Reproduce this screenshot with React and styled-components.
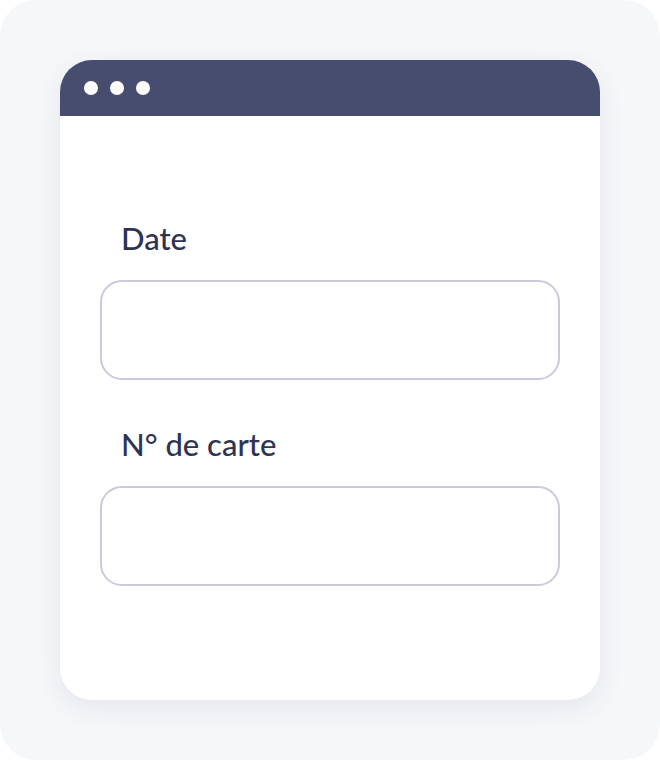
import styled, { createGlobalStyle } from "styled-components";

const Global = createGlobalStyle`
	html, body {
		margin: 0;
		padding: 0;
		background: #ffffff;
	}
`;

const Page = styled.div`
	width: 660px;
	height: 760px;
	box-sizing: border-box;
	background-color: #f6f7f9;
	border-radius: 36px;
	padding: 60px;
`;

const Window = styled.div`
	width: 540px;
	height: 640px;
	background-color: #ffffff;
	border-radius: 32px;
	overflow: hidden;
	box-shadow: 0 8px 28px rgba(60, 66, 110, 0.09);
`;

const TitleBar = styled.div`
	height: 56px;
	background-color: #474d6e;
	display: flex;
	align-items: center;
	gap: 12px;
	padding-left: 24px;
`;

const Dot = styled.span`
	width: 14px;
	height: 14px;
	border-radius: 50%;
	background-color: #ffffff;
`;

const Body = styled.div`
	padding: 104px 40px 0;
	display: flex;
	flex-direction: column;
`;

const Field = styled.div`
	display: flex;
	flex-direction: column;
	margin-bottom: ${(p) => p.$spacing || 0}px;
`;

const Label = styled.label`
	font-family: "Lato", "Liberation Sans", sans-serif;
	font-size: 31px;
	font-weight: 500;
	line-height: 36px;
	color: #2f3352;
	padding-left: 21px;
	margin-bottom: 24px;
`;

const Input = styled.div`
	height: 100px;
	box-sizing: border-box;
	border: 2px solid #c9cadd;
	border-radius: 22px;
`;

function App() {
	return (
		<>
			<Global />
			<Page>
				<Window>
					<TitleBar>
						<Dot />
						<Dot />
						<Dot />
					</TitleBar>
					<Body>
						<Field $spacing={46}>
							<Label>Date</Label>
							<Input />
						</Field>
						<Field>
							<Label>N° de carte</Label>
							<Input />
						</Field>
					</Body>
				</Window>
			</Page>
		</>
	);
}

export default App;
